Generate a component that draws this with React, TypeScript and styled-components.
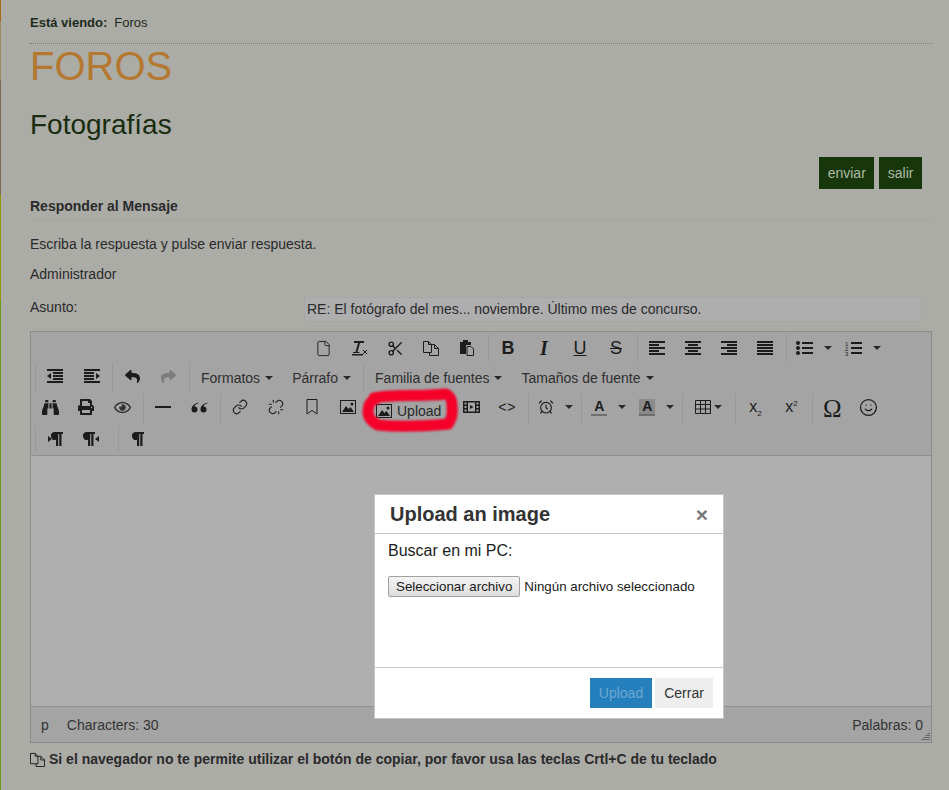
import styled, { createGlobalStyle } from 'styled-components';
import { FaBinoculars, FaPrint, FaReply, FaShare, FaRegEye } from 'react-icons/fa';
import { LuScissors, LuLink, LuUnlink, LuAlarmClock, LuSmile, LuFile } from 'react-icons/lu';

const GlobalStyle = createGlobalStyle`
  html, body {
    margin: 0;
    padding: 0;
    height: 790px;
    overflow: hidden;
    background: #acaca6;
    font-family: "Liberation Sans", Arial, sans-serif;
    font-size: 14px;
    color: #2a2a2c;
  }
`;

const Lines = ({ rows }: { rows: [number, number][] }) => (
  <svg width="17" height="14" viewBox="0 0 17 14">
    {rows.map(([x, w], i) => (
      <rect key={i} x={x} y={i * 3} width={w} height="2" fill="#1c1c1c" />
    ))}
  </svg>
);

const IndentIcon = ({ flip }: { flip?: boolean }) => (
  <svg width="17" height="14" viewBox="0 0 17 14" style={flip ? { transform: 'scaleX(-1)' } : undefined}>
    <rect x="0" y="0" width="16" height="2" fill="#1c1c1c" />
    <rect x="6" y="3" width="10" height="2" fill="#1c1c1c" />
    <rect x="6" y="6" width="10" height="2" fill="#1c1c1c" />
    <rect x="6" y="9" width="10" height="2" fill="#1c1c1c" />
    <rect x="0" y="12" width="16" height="2" fill="#1c1c1c" />
    <path d="M4 4v6L0 7z" fill="#1c1c1c" />
  </svg>
);

const ImageIcon = () => (
  <svg width="16" height="14" viewBox="0 0 16 14">
    <rect x="0.5" y="0.5" width="15" height="13" fill="none" stroke="#1c1c1c" />
    <path d="M2 12l4-6 2.500 3 2-2 3.500 5z" fill="#1c1c1c" />
    <circle cx="12" cy="4" r="1.500" fill="#1c1c1c" />
  </svg>
);

const FilmIcon = () => (
  <svg width="17" height="14" viewBox="0 0 17 14">
    <path d="M0 1h17v12H0zM1.500 2.500v2h2v-2zm0 3.500v2h2V6zm0 3.500v2h2v-2zm12-7v2h2v-2zm0 3.500v2h2V6zm0 3.500v2h2v-2zM5 2.500v9h7v-9z" fill="#1c1c1c" fillRule="evenodd" />
    <path d="M7 5l3.500 2L7 9z" fill="#1c1c1c" />
  </svg>
);

const ClearFormat = () => (
  <svg width="18" height="16" viewBox="0 0 18 16">
    <path d="M4 1h10v2h-4l-2.500 9h2v1H3v-1h2.500L8 3H4z" fill="#1c1c1c" />
    <rect x="2" y="14" width="11" height="1.500" fill="#1c1c1c" />
    <path d="M13 10l4 4m0-4l-4 4" stroke="#1c1c1c" fill="none" />
  </svg>
);

const CopyIcon = ({ size = 16 }: { size?: number }) => (
  <svg width={size} height={size} viewBox="0 0 16 16">
    <path d="M0.500 1.500h5l3 3v8h-8z" fill="none" stroke="#1c1c1c" />
    <path d="M8.500 4.500h3l4 4v7h-9v-3" fill="none" stroke="#1c1c1c" />
    <path d="M5.500 1.500v3h3M11.500 4.500v4h4" fill="none" stroke="#1c1c1c" />
  </svg>
);

const PasteIcon = () => (
  <svg width="16" height="16" viewBox="0 0 16 16">
    <path d="M1 2h3V0h5v2h3v3H7v9H1z" fill="#1c1c1c" />
    <path d="M8 6.500h4l2.500 2.500v6.500H8z" fill="#a4a4a4" stroke="#1c1c1c" />
  </svg>
);

const BulletIcon = () => (
  <svg width="17" height="14" viewBox="0 0 17 14">
    <circle cx="2" cy="2" r="2" fill="#1c1c1c" />
    <circle cx="2" cy="7" r="2" fill="#1c1c1c" />
    <circle cx="2" cy="12" r="2" fill="#1c1c1c" />
    <rect x="6" y="1" width="11" height="2" fill="#1c1c1c" />
    <rect x="6" y="6" width="11" height="2" fill="#1c1c1c" />
    <rect x="6" y="11" width="11" height="2" fill="#1c1c1c" />
  </svg>
);

const NumberIcon = () => (
  <svg width="17" height="16" viewBox="0 0 17 16">
    <rect x="6" y="2" width="11" height="2" fill="#1c1c1c" />
    <rect x="6" y="7" width="11" height="2" fill="#1c1c1c" />
    <rect x="6" y="12" width="11" height="2" fill="#1c1c1c" />
    <text x="0" y="5.500" fontSize="6" fill="#1c1c1c" fontFamily="Liberation Sans">1</text>
    <text x="0" y="10.500" fontSize="6" fill="#1c1c1c" fontFamily="Liberation Sans">2</text>
    <text x="0" y="15.500" fontSize="6" fill="#1c1c1c" fontFamily="Liberation Sans">3</text>
  </svg>
);

const TableIcon = () => (
  <svg width="16" height="14" viewBox="0 0 16 14">
    <path d="M0.500 0.500h15v13h-15zM0.500 4.500h15M0.500 9h15M5.500 0.500v13M10.500 0.500v13" fill="none" stroke="#1c1c1c" />
  </svg>
);

const QuoteIcon = () => (
  <svg width="17" height="11" viewBox="0 0 17 11">
    <path d="M7.500 0.500C3.500 1.500 0.500 4 0.500 7.500a3 3 0 1 0 3-3c0-1.500 2-2.700 4-3.200z" fill="#1c1c1c" />
    <path d="M16.500 0.500c-4 1-7 3.500-7 7a3 3 0 1 0 3-3c0-1.500 2-2.700 4-3.200z" fill="#1c1c1c" />
  </svg>
);

const BookmarkIcon = () => (
  <svg width="12" height="16" viewBox="0 0 12 16">
    <path d="M1 0.500h10v14.500L6 11.500 1 15z" fill="none" stroke="#1c1c1c" />
  </svg>
);

const Pilcrow = ({ mark }: { mark?: 'left' | 'right' }) => {
  const box = mark === 'left' ? '2 0 15 14' : mark === 'right' ? '0 0 16 14' : '5 0 12 14';
  const width = mark === 'left' ? 15 : mark === 'right' ? 16 : 12;
  return (
    <svg width={width} height="14" viewBox={box}>
      <path d="M8 0h9v2h-1.500v12h-2.200V2h-1.100v12H10V7.800A3.900 3.900 0 0 1 8 0z" fill="#1c1c1c" transform={mark === 'right' ? 'translate(-5 0)' : undefined} />
      {mark === 'left' && <path d="M2 4l4 3-4 3z" fill="#1c1c1c" />}
      {mark === 'right' && <path d="M16 4l-4 3 4 3z" fill="#1c1c1c" />}
    </svg>
  );
};

const Main = () => (
  <Page>
    <GlobalStyle />
    <Breadcrumb>
      <b>Está viendo:</b>
      <span>Foros</span>
    </Breadcrumb>
    <Title>FOROS</Title>
    <SubTitle>Fotografías</SubTitle>
    <Actions>
      <ActionButton>enviar</ActionButton>
      <ActionButton>salir</ActionButton>
    </Actions>
    <SectionTitle>Responder al Mensaje</SectionTitle>
    <Paragraph $top={16}>Escriba la respuesta y pulse enviar respuesta.</Paragraph>
    <Paragraph $top={15}>Administrador</Paragraph>
    <SubjectRow>
      <SubjectLabel>Asunto:</SubjectLabel>
      <SubjectInput>RE: El fotógrafo del mes... noviembre. Último mes de concurso.</SubjectInput>
    </SubjectRow>

    <Editor>
      <Toolbar>
        <ToolRow $indent={273}>
          <Group $first>
            <ToolButton><LuFile size={17} strokeWidth={1.3} /></ToolButton>
            <ToolButton><ClearFormat /></ToolButton>
            <ToolButton><LuScissors size={17} strokeWidth={2} /></ToolButton>
            <ToolButton><CopyIcon /></ToolButton>
            <ToolButton><PasteIcon /></ToolButton>
          </Group>
          <Group>
            <ToolButton><Glyph $bold>B</Glyph></ToolButton>
            <ToolButton><Glyph $bold $italic>I</Glyph></ToolButton>
            <ToolButton><Glyph $underline>U</Glyph></ToolButton>
            <ToolButton><Glyph $strike>S</Glyph></ToolButton>
          </Group>
          <Group>
            <ToolButton><Lines rows={[[0, 16], [0, 10], [0, 16], [0, 10], [0, 16]]} /></ToolButton>
            <ToolButton><Lines rows={[[0, 16], [3, 10], [0, 16], [3, 10], [0, 16]]} /></ToolButton>
            <ToolButton><Lines rows={[[0, 16], [6, 10], [0, 16], [6, 10], [0, 16]]} /></ToolButton>
            <ToolButton><Lines rows={[[0, 16], [0, 16], [0, 16], [0, 16], [0, 16]]} /></ToolButton>
          </Group>
          <Group>
            <SplitButton><BulletIcon /><Caret /></SplitButton>
            <SplitButton><NumberIcon /><Caret /></SplitButton>
          </Group>
        </ToolRow>

        <ToolRow $indent={4}>
          <Group>
            <ToolButton><IndentIcon /></ToolButton>
            <ToolButton><IndentIcon flip /></ToolButton>
          </Group>
          <Group>
            <ToolButton><FaReply size={15} color="#1c1c1c" /></ToolButton>
            <ToolButton><FaShare size={15} color="#7c7c7c" /></ToolButton>
          </Group>
          <Group>
            <ListBox>Formatos<Caret /></ListBox>
            <ListBox>Párrafo<Caret /></ListBox>
          </Group>
          <Group>
            <ListBox>Familia de fuentes<Caret /></ListBox>
            <ListBox>Tamaños de fuente<Caret /></ListBox>
          </Group>
        </ToolRow>

        <ToolRow $indent={0}>
          <Group $first>
            <ToolButton><FaBinoculars size={17} color="#1c1c1c" /></ToolButton>
            <ToolButton><FaPrint size={16} color="#1c1c1c" /></ToolButton>
            <ToolButton><FaRegEye size={17} color="#333" /></ToolButton>
          </Group>
          <Group>
            <ToolButton><Rule /></ToolButton>
            <ToolButton><QuoteIcon /></ToolButton>
          </Group>
          <Group>
            <ToolButton><LuLink size={16} strokeWidth={1.6} /></ToolButton>
            <ToolButton><LuUnlink size={16} strokeWidth={1.6} /></ToolButton>
            <ToolButton><BookmarkIcon /></ToolButton>
            <ToolButton><ImageIcon /></ToolButton>
            <UploadButton><ImageIcon /><span>Upload</span></UploadButton>
            <ToolButton><FilmIcon /></ToolButton>
            <ToolButton><CodeGlyph>{'<>'}</CodeGlyph></ToolButton>
          </Group>
          <Group>
            <SplitButton><LuAlarmClock size={16} strokeWidth={1.7} /><Caret /></SplitButton>
          </Group>
          <Group>
            <SplitButton><ColorGlyph $bar="#6e6e6e">A</ColorGlyph><Caret /></SplitButton>
            <SplitButton><ColorGlyph $bar="#6e6e6e" $fill="#8a8a8a">A</ColorGlyph><Caret /></SplitButton>
          </Group>
          <Group>
            <ToolButton $wide><TableIcon /><Caret /></ToolButton>
          </Group>
          <Group>
            <ToolButton><Script>x<sub>2</sub></Script></ToolButton>
            <ToolButton><Script>x<sup>2</sup></Script></ToolButton>
          </Group>
          <Group>
            <ToolButton><Omega>Ω</Omega></ToolButton>
            <ToolButton><LuSmile size={19} strokeWidth={1.6} /></ToolButton>
          </Group>
        </ToolRow>

        <ToolRow $indent={4}>
          <Group $spaced>
            <ToolButton><Pilcrow mark="left" /></ToolButton>
            <ToolButton><Pilcrow mark="right" /></ToolButton>
          </Group>
          <Group>
            <ToolButton><Pilcrow /></ToolButton>
          </Group>
        </ToolRow>
      </Toolbar>
      <Content />
      <StatusBar>
        <span>p</span>
        <span>Characters: 30</span>
        <WordCount>Palabras: 0</WordCount>
        <Grip />
      </StatusBar>
    </Editor>

    <Note>
      <CopyIcon size={15} />
      Si el navegador no te permite utilizar el botón de copiar, por favor usa las teclas Crtl+C de tu teclado
    </Note>

    <Scribble width="110" height="56" viewBox="0 0 110 56">
      <path
        d="M16 13C35 9 60 12 88 9c5 2 6 6 6 12 1 8 0 13-4 18-22 2-50 3-70 1-6-3-10-8-10-14 0-7 3-10 8-12"
        fill="none"
        stroke="#f50029"
        strokeWidth="11"
        strokeLinecap="round"
      />
    </Scribble>

    <Modal>
      <ModalHeader>
        <ModalTitle>Upload an image</ModalTitle>
        <CloseMark>×</CloseMark>
      </ModalHeader>
      <ModalBody>
        <PickLabel>Buscar en mi PC:</PickLabel>
        <FileRow>
          <FileButton>Seleccionar archivo</FileButton>
          <span>Ningún archivo seleccionado</span>
        </FileRow>
      </ModalBody>
      <ModalFooter>
        <PrimaryButton>Upload</PrimaryButton>
        <SecondaryButton>Cerrar</SecondaryButton>
      </ModalFooter>
    </Modal>
  </Page>
);

export default Main;

const Page = styled.div`
  position: relative;
  box-sizing: border-box;
  width: 949px;
  height: 790px;
  overflow: hidden;
  padding: 14px 17px 0 30px;
  background:
    linear-gradient(
      to bottom,
      #a86a14 0 22px,
      #9c8a66 22px 80px,
      #7c6a50 80px 195px,
      #8f9a10 195px 300px,
      #6a9a1a 300px 790px
    ) left top / 1px 100% no-repeat,
    #acaca6;
`;

const Breadcrumb = styled.div`
  display: flex;
  gap: 7px;
  height: 30px;
  padding-top: 1px;
  box-sizing: border-box;
  border-bottom: 1px dotted #7c7c78;
  font-size: 13px;
  line-height: 16px;
  color: #1d2b1c;
`;

const Title = styled.h1`
  margin: 0;
  font-size: 40px;
  font-weight: normal;
  line-height: 44px;
  color: #b57830;
`;

const SubTitle = styled.h2`
  margin: 20px 0 0;
  font-size: 28px;
  font-weight: normal;
  line-height: 34px;
  color: #182c10;
`;

const Actions = styled.div`
  display: flex;
  justify-content: flex-end;
  gap: 5px;
  height: 32px;
  margin: 15px 10px 0 0;
`;

const ActionButton = styled.div`
  display: flex;
  align-items: center;
  padding: 0 8.500px;
  background: #17360a;
  color: #aebaa6;
  font-size: 14px;
`;

const SectionTitle = styled.div`
  box-sizing: border-box;
  height: 32px;
  padding-top: 9px;
  border-bottom: 1px solid #a6a6a0;
  font-size: 14px;
  font-weight: bold;
  line-height: 16px;
`;

const Paragraph = styled.p<{ $top: number }>`
  margin: ${(p) => p.$top}px 0 0;
  font-size: 14px;
  line-height: 15px;
`;

const SubjectRow = styled.div`
  display: flex;
  justify-content: space-between;
  margin: 15px 10px 0 0;
  height: 25px;
`;

const SubjectLabel = styled.label`
  padding-top: 2px;
  font-size: 14px;
  line-height: 16px;
`;

const SubjectInput = styled.div`
  box-sizing: border-box;
  width: 618px;
  height: 25px;
  padding: 0 2px;
  border: 1px solid #a6a6a6;
  background: #aeaeae;
  font-size: 14px;
  line-height: 23px;
`;

const Editor = styled.div`
  box-sizing: border-box;
  width: 902px;
  margin-top: 9px;
  border: 1px solid #8a8a8a;
  background: #a4a4a4;
`;

const Toolbar = styled.div`
  display: flex;
  flex-direction: column;
  gap: 2px;
  padding: 3px 0 3px;
  border-bottom: 1px solid #8e8e8e;
`;

const ToolRow = styled.div<{ $indent: number }>`
  display: flex;
  align-items: stretch;
  min-height: 26px;
  padding-left: ${(p) => p.$indent}px;
`;

const Group = styled.div<{ $first?: boolean; $spaced?: boolean }>`
  display: flex;
  align-items: flex-start;
  padding-left: ${(p) => (p.$first ? 0 : 1)}px;
  margin-right: ${(p) => (p.$spaced ? 9 : 3)}px;
  border-left: 1px solid ${(p) => (p.$first ? 'transparent' : '#989898')};
`;

const ToolButton = styled.div<{ $wide?: boolean }>`
  display: flex;
  align-items: center;
  justify-content: center;
  gap: 3px;
  box-sizing: border-box;
  width: ${(p) => (p.$wide ? 48 : 36)}px;
  height: 26px;
  color: #1c1c1c;
`;

const SplitButton = styled.div`
  display: flex;
  align-items: center;
  gap: 11px;
  box-sizing: border-box;
  height: 26px;
  padding: 0 5px 0 8px;
  color: #1c1c1c;
`;

const UploadButton = styled.div`
  display: flex;
  align-items: center;
  gap: 5px;
  height: 30px;
  padding: 3px 12px 0 10px;
  box-sizing: border-box;
  font-size: 14px;
  color: #2a2a2a;
`;

const ListBox = styled.div`
  display: flex;
  align-items: center;
  gap: 5px;
  height: 29px;
  padding: 1px 9px 0 10px;
  box-sizing: border-box;
  font-size: 14px;
  color: #2f2f2f;
`;

const Caret = styled.i`
  width: 0;
  height: 0;
  border-left: 4px solid transparent;
  border-right: 4px solid transparent;
  border-top: 4px solid #2a2a2a;
`;

const Glyph = styled.span<{ $bold?: boolean; $italic?: boolean; $underline?: boolean; $strike?: boolean }>`
  font-family: ${(p) => (p.$italic ? '"Liberation Serif", serif' : '"Liberation Sans", sans-serif')};
  font-size: ${(p) => (p.$italic ? 20 : 18)}px;
  line-height: 20px;
  font-weight: ${(p) => (p.$bold ? 'bold' : 'normal')};
  font-style: ${(p) => (p.$italic ? 'italic' : 'normal')};
  text-decoration: ${(p) => (p.$underline ? 'underline' : p.$strike ? 'line-through' : 'none')};
  color: #1c1c1c;
`;

const CodeGlyph = styled.span`
  font-family: "Liberation Sans", sans-serif;
  font-size: 14px;
  letter-spacing: 1px;
`;

const ColorGlyph = styled.span<{ $bar: string; $fill?: string }>`
  display: inline-block;
  width: 16px;
  height: 17px;
  box-sizing: border-box;
  text-align: center;
  font-size: 14px;
  font-weight: bold;
  line-height: 15px;
  background: ${(p) => p.$fill ?? 'transparent'};
  border-bottom: 2px solid ${(p) => p.$bar};
`;

const Script = styled.span`
  font-size: 16px;
  line-height: 16px;
  sub, sup {
    font-size: 8px;
    line-height: 0;
  }
`;

const Omega = styled.span`
  padding-top: 3px;
  font-family: "Liberation Serif", serif;
  font-size: 25px;
  line-height: 22px;
`;

const Rule = styled.i`
  display: block;
  width: 16px;
  height: 2px;
  background: #1c1c1c;
`;

const Content = styled.div`
  height: 250px;
  background: #afafaf;
  border-bottom: 1px solid #8e8e8e;
`;

const StatusBar = styled.div`
  position: relative;
  display: flex;
  align-items: center;
  gap: 18px;
  height: 35px;
  padding: 0 8px 0 10px;
  box-sizing: border-box;
  font-size: 14px;
  color: #333;
`;

const WordCount = styled.span`
  margin-left: auto;
`;

const Grip = styled.i`
  position: absolute;
  right: 1px;
  bottom: 1px;
  width: 10px;
  height: 10px;
  background: repeating-linear-gradient(to bottom, #666 0 1px, transparent 1px 2px);
  clip-path: polygon(100% 0, 100% 100%, 0 100%);
`;

const Note = styled.div`
  display: flex;
  align-items: center;
  gap: 4px;
  margin-top: 8px;
  font-size: 14px;
  font-weight: bold;
  line-height: 16px;
`;

const Scribble = styled.svg`
  position: absolute;
  left: 358px;
  top: 385px;
  filter: blur(1px);
`;

const Modal = styled.div`
  position: absolute;
  left: 374px;
  top: 494px;
  box-sizing: border-box;
  width: 350px;
  height: 225px;
  border: 1px solid #c6c6c6;
  background: #fff;
  display: flex;
  flex-direction: column;
`;

const ModalHeader = styled.div`
  display: flex;
  align-items: center;
  justify-content: space-between;
  box-sizing: border-box;
  height: 39px;
  padding: 0 15px;
  border-bottom: 1px solid #c4c4c4;
`;

const ModalTitle = styled.div`
  font-size: 20px;
  font-weight: bold;
  color: #333;
`;

const CloseMark = styled.span`
  font-size: 21px;
  font-weight: bold;
  line-height: 21px;
  color: #777;
`;

const ModalBody = styled.div`
  flex: 1;
  padding: 8px 13px 0;
  border-bottom: 1px solid #c8c8c8;
`;

const PickLabel = styled.div`
  font-size: 16px;
  line-height: 18px;
  color: #1c1c1c;
`;

const FileRow = styled.div`
  display: flex;
  align-items: center;
  gap: 4px;
  margin-top: 16px;
  font-size: 13.33px;
  color: #1a1a1a;
`;

const FileButton = styled.div`
  box-sizing: border-box;
  height: 21px;
  padding: 0 7px;
  line-height: 19px;
  border: 1px solid #a0a0a0;
  border-radius: 2px;
  background: linear-gradient(#f4f4f4, #dedede);
`;

const ModalFooter = styled.div`
  display: flex;
  justify-content: flex-end;
  align-items: flex-start;
  gap: 3px;
  box-sizing: border-box;
  height: 50px;
  padding: 10px 10px 0 0;
`;

const PrimaryButton = styled.div`
  width: 62px;
  height: 30px;
  line-height: 30px;
  text-align: center;
  font-size: 14px;
  background: #247fbc;
  color: #6ea8d2;
`;

const SecondaryButton = styled.div`
  width: 58px;
  height: 30px;
  line-height: 30px;
  text-align: center;
  font-size: 14px;
  background: #eeeeee;
  color: #333;
`;
